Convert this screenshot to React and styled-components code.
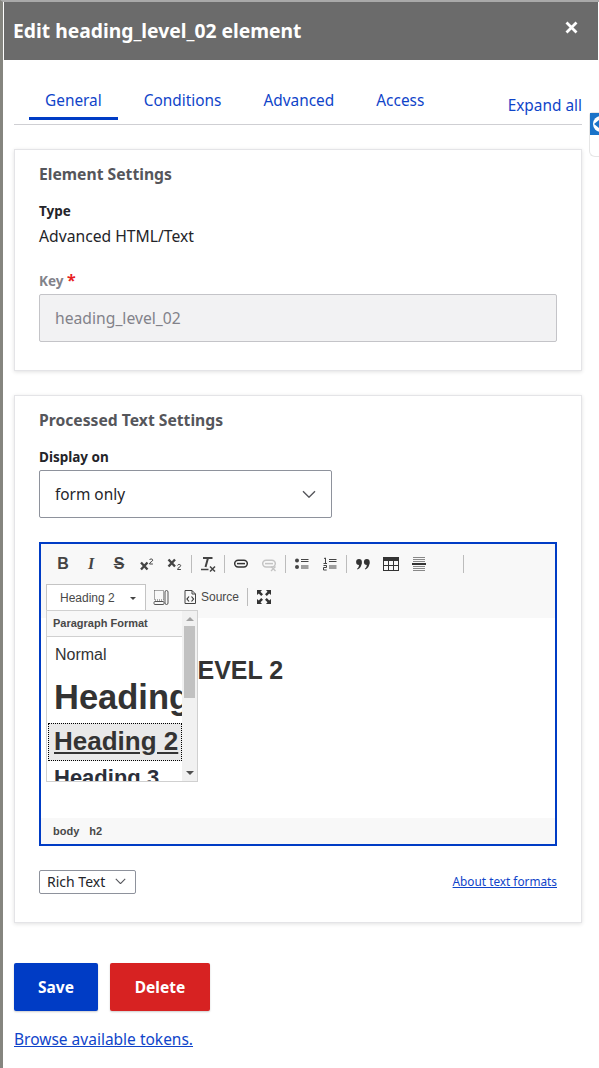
import styled, { createGlobalStyle } from "styled-components";

const GlobalStyle = createGlobalStyle`
  html, body {
    margin: 0;
    padding: 0;
    height: 100%;
    overflow: hidden;
    background: #fff;
  }
  body {
    font-family: "Noto Sans", "Open Sans", sans-serif;
  }
`;

const Icon = ({ children, w = 16, h = 16, vb }) => (
  <svg width={w} height={h} viewBox={vb || `0 0 ${w} ${h}`} fill="none">
    {children}
  </svg>
);

const SuperIcon = () => (
  <Icon>
    <path d="M2 6.500l6.500 7M8.500 6.500l-6.500 7" stroke="#444" strokeWidth="2.400" />
    <path d="M10.500 4c.3-1.400 3.200-1.500 3.200.2 0 1.400-3.200 1.900-3.200 3.800h3.400" stroke="#444" strokeWidth="1" />
  </Icon>
);

const SubIcon = () => (
  <Icon>
    <path d="M1.500 3.500l6.500 7M8 3.500l-6.500 7" stroke="#444" strokeWidth="2.400" />
    <path d="M10.500 9.500c.3-1.400 3.200-1.500 3.200.2 0 1.400-3.200 1.900-3.200 3.800h3.400" stroke="#444" strokeWidth="1" />
  </Icon>
);

const ClearIcon = () => (
  <Icon>
    <path d="M3 2h9.500M8 2L5.500 11" stroke="#444" strokeWidth="2" />
    <path d="M1 13.500h7.500" stroke="#444" strokeWidth="1.500" />
    <path d="M10 10.500l5 5M15 10.500l-5 5" stroke="#444" strokeWidth="1.500" />
  </Icon>
);

const LinkIcon = ({ off }) => (
  <Icon>
    <rect
      x="1.700"
      y="4.200"
      width="12.600"
      height="6.800"
      rx="3.400"
      stroke={off ? "#c4c4c4" : "#333"}
      strokeWidth="1.500"
    />
    <path d="M4 7.600h8" stroke={off ? "#c4c4c4" : "#333"} strokeWidth="1.500" />
    {off && <path d="M10 10.500l4.500 4.500M14.500 10.500L10 15" stroke="#c4c4c4" strokeWidth="1.300" />}
  </Icon>
);

const BulletIcon = () => (
  <Icon>
    <circle cx="3" cy="4.500" r="2" fill="#444" />
    <circle cx="3" cy="11" r="2" fill="#444" />
    <path d="M7 3.500h7.500M7 5.500h7.500M7 10h7.500M7 12h7.500" stroke="#444" strokeWidth="1" />
  </Icon>
);

const NumberIcon = () => (
  <Icon>
    <path d="M2 2.500l1.500-.5v5M1.500 7.500h3.500" stroke="#444" strokeWidth="1" />
    <path d="M1.500 9.500h3v2h-3v2.500h3.200" stroke="#444" strokeWidth="1" />
    <path d="M7 3.500h7.500M7 5.500h7.500M7 10h7.500M7 12h7.500" stroke="#444" strokeWidth="1" />
  </Icon>
);

const QuoteIcon = () => (
  <Icon>
    <circle cx="4" cy="6" r="2.900" fill="#333" />
    <path d="M6.800 6.200C6.800 10 5 12.500 2.500 13.500L2 12.800c1.500-1 2-2.500 2-4z" fill="#333" />
    <circle cx="11.800" cy="6" r="2.900" fill="#333" />
    <path d="M14.600 6.200c0 3.800-1.800 6.300-4.300 7.300l-.5-.7c1.500-1 2-2.500 2-4z" fill="#333" />
  </Icon>
);

const TableIcon = () => (
  <Icon>
    <rect x="0.500" y="1.500" width="15" height="13" stroke="#333" />
    <rect x="0.500" y="1.500" width="15" height="3.500" fill="#333" />
    <path d="M5.500 5v9M10.500 5v9M1 9.500h14" stroke="#333" />
  </Icon>
);

const RuleIcon = () => (
  <Icon>
    <path d="M2 1.500h12M2 3.500h12M2 5.500h12M2 10.500h12M2 12.500h12M2 14.500h12" stroke="#888" />
    <path d="M1 8h14" stroke="#333" strokeWidth="2" />
  </Icon>
);

const BlocksIcon = () => (
  <Icon>
    <rect x="1.500" y="1.500" width="9" height="9.500" stroke="#555" strokeDasharray="1 1" />
    <rect x="1" y="12.500" width="10" height="3" rx="1" stroke="#555" />
    <rect x="12" y="1.500" width="3" height="14" rx="1.500" stroke="#555" />
  </Icon>
);

const SourceIcon = () => (
  <Icon>
    <path d="M3 1.500h7l3.500 3.500v9.500H3z" stroke="#444" />
    <path d="M10 1.500V5h3.500" stroke="#444" />
    <path d="M7 7.500L5 10l2 2.500M9.500 7.500l2 2.500-2 2.500" stroke="#333" strokeWidth="1.200" />
  </Icon>
);

const MaximizeIcon = () => (
  <Icon>
    <path
      d="M1 1h5L4.500 2.800 7 5.200 5.200 7 2.800 4.500 1 6zM15 1v5l-1.800-1.500L10.800 7 9 5.200l2.500-2.400L10 1zM1 15v-5l1.800 1.500L5.200 9 7 10.800l-2.500 2.400L6 15zM15 15h-5l1.500-1.800L9 10.800 10.800 9l2.400 2.500L15 10z"
      fill="#333"
    />
  </Icon>
);

const Chevron = ({ w = 14 }) => (
  <svg width={w} height={w * 0.6} viewBox="0 0 14 8" fill="none">
    <path d="M1 1l6 6 6-6" stroke="#55565b" strokeWidth="1.400" />
  </svg>
);

export default function App() {
  return (
    <Page>
      <GlobalStyle />
      <Dialog>
        <Header>
          <Title>Edit heading_level_02 element</Title>
          <Close>
            <svg width="13" height="13" viewBox="0 0 13 13">
              <path d="M1.500 1.500l10 10M11.500 1.500l-10 10" stroke="#fff" strokeWidth="2.800" />
            </svg>
          </Close>
        </Header>
        <Body>
          <TabBar>
            <Tab $active>General</Tab>
            <Tab>Conditions</Tab>
            <Tab>Advanced</Tab>
            <Tab>Access</Tab>
            <ExpandAll>Expand all</ExpandAll>
          </TabBar>

          <Card $height={222}>
            <CardTitle>Element Settings</CardTitle>
            <Label>Type</Label>
            <Value>Advanced HTML/Text</Value>
            <Label $muted $top={22}>
              Key <Required>*</Required>
            </Label>
            <DisabledInput>heading_level_02</DisabledInput>
          </Card>

          <Card $height={528}>
            <CardTitle>Processed Text Settings</CardTitle>
            <Label>Display on</Label>
            <SelectBox>
              form only
              <Chevron />
            </SelectBox>

            <Editor>
              <Toolbar>
                <ToolRow>
                  <ToolBtn><Glyph>B</Glyph></ToolBtn>
                  <ToolBtn><Glyph $italic>I</Glyph></ToolBtn>
                  <ToolBtn><Glyph $strike>S</Glyph></ToolBtn>
                  <ToolBtn><SuperIcon /></ToolBtn>
                  <ToolBtn><SubIcon /></ToolBtn>
                  <Sep />
                  <ToolBtn><ClearIcon /></ToolBtn>
                  <Sep />
                  <ToolBtn><LinkIcon /></ToolBtn>
                  <ToolBtn><LinkIcon off /></ToolBtn>
                  <Sep />
                  <ToolBtn><BulletIcon /></ToolBtn>
                  <ToolBtn><NumberIcon /></ToolBtn>
                  <Sep />
                  <ToolBtn><QuoteIcon /></ToolBtn>
                  <ToolBtn><TableIcon /></ToolBtn>
                  <ToolBtn><RuleIcon /></ToolBtn>
                  <ToolBtn />
                  <Sep />
                </ToolRow>
                <ComboRow>
                  <Combo>
                    Heading 2
                    <ComboArrow />
                  </Combo>
                  <ToolBtn><BlocksIcon /></ToolBtn>
                  <SourceBtn>
                    <SourceIcon />
                    Source
                  </SourceBtn>
                  <Sep />
                  <ToolBtn><MaximizeIcon /></ToolBtn>
                </ComboRow>
              </Toolbar>
              <Content>
                <ContentHeading>HEADING LEVEL 2</ContentHeading>
              </Content>
              <PathBar>
                <span>body</span>
                <span>h2</span>
              </PathBar>
              <FormatPanel>
                <PanelList>
                  <PanelTitle>Paragraph Format</PanelTitle>
                  <OptNormal>Normal</OptNormal>
                  <OptH1>Heading 1</OptH1>
                  <OptH2>Heading 2</OptH2>
                  <OptH3>Heading 3</OptH3>
                </PanelList>
                <Scroll>
                  <ArrowUp />
                  <Thumb />
                  <ArrowDown />
                </Scroll>
              </FormatPanel>
            </Editor>

            <FormatRow>
              <FormatSelect>
                Rich Text
                <Chevron w={11} />
              </FormatSelect>
              <SmallLink>About text formats</SmallLink>
            </FormatRow>
          </Card>

          <Actions>
            <Button $bg="#003cc5" $width={84}>Save</Button>
            <Button $bg="#d72222" $width={100}>Delete</Button>
          </Actions>
          <TokenLink>Browse available tokens.</TokenLink>
        </Body>
      </Dialog>
      <SideTab>
        <SideBlue>
          <svg width="10" height="22" viewBox="0 0 10 22">
            <circle cx="11" cy="11" r="8" fill="#fff" />
            <path d="M4 11l5-4v8z" fill="#1a73c9" />
          </svg>
        </SideBlue>
      </SideTab>
    </Page>
  );
}

const Page = styled.div`
  position: relative;
  width: 599px;
  height: 1068px;
  overflow: hidden;
  background: #fff;
  box-sizing: border-box;
  border-left: 3px solid #85857f;
  border-top: 2px solid #a9a9a9;
`;
const Dialog = styled.div`
  display: flex;
  flex-direction: column;
  background: #fff;
  margin-left: 1px;
`;
const Header = styled.div`
  height: 58px;
  width: 594px;
  background: #6b6b6b;
  display: flex;
  justify-content: space-between;
  padding: 0 20px 0 9px;
  box-sizing: border-box;
`;
const Title = styled.div`
  color: #fff;
  font-size: 19.300px;
  font-weight: 700;
  line-height: 58px;
`;
const Close = styled.div`
  display: flex;
  padding-top: 19px;
`;
const Body = styled.div`
  padding: 0 16px 0 10px;
  width: 568px;
`;
const TabBar = styled.div`
  height: 64px;
  border-bottom: 1px solid #cfcfd3;
  display: flex;
  align-items: flex-end;
  padding-left: 15px;
  position: relative;
  margin-bottom: 24px;
`;
const Tab = styled.div`
  height: 38px;
  box-sizing: border-box;
  padding: 8px 16px 0;
  margin: 0 10px 4px 0;
  font-size: 15.400px;
  line-height: 22px;
  color: #0f44c9;
  border-bottom: 3px solid ${(p) => (p.$active ? "#003cc5" : "transparent")};
`;
const ExpandAll = styled.div`
  margin-left: auto;
  font-size: 15.400px;
  line-height: 22px;
  color: #0f44c9;
  margin-bottom: 7px;
`;
const Card = styled.section`
  height: ${(p) => p.$height}px;
  box-sizing: border-box;
  border: 1px solid #e4e4e7;
  box-shadow: 0 1px 4px rgba(0, 0, 0, 0.12);
  padding: 13px 24px;
  margin-bottom: 24px;
`;
const CardTitle = styled.h3`
  margin: 0 0 16px;
  font-size: 15.700px;
  line-height: 22px;
  font-weight: 700;
  color: #55565b;
`;
const Label = styled.div`
  font-size: 13.500px;
  line-height: 20px;
  font-weight: 700;
  color: ${(p) => (p.$muted ? "#82828a" : "#232429")};
  margin-top: ${(p) => p.$top || 0}px;
  margin-bottom: 3px;
`;
const Required = styled.span`
  color: #e81f1f;
  font-size: 16px;
`;
const Value = styled.div`
  font-size: 15.700px;
  line-height: 24px;
  color: #232429;
`;
const DisabledInput = styled.div`
  height: 48px;
  box-sizing: border-box;
  background: #f2f2f3;
  border: 1px solid #c4c4c8;
  border-radius: 2px;
  padding: 0 15px;
  line-height: 46px;
  font-size: 15.700px;
  color: #82828a;
`;
const SelectBox = styled.div`
  width: 293px;
  height: 48px;
  box-sizing: border-box;
  border: 1px solid #8e929c;
  border-radius: 2px;
  padding: 0 15px;
  font-size: 15.400px;
  color: #232429;
  display: flex;
  align-items: center;
  justify-content: space-between;
`;
const Editor = styled.div`
  position: relative;
  margin-top: 24px;
  height: 304px;
  box-sizing: border-box;
  border: 2px solid #003cc5;
  display: flex;
  flex-direction: column;
`;
const Toolbar = styled.div`
  height: 74px;
  background: #f8f8f8;
  padding: 5px 0 0 5px;
  box-sizing: border-box;
  flex-shrink: 0;
`;
const ToolRow = styled.div`
  display: flex;
  align-items: center;
  height: 30px;
  padding-left: 3px;
`;
const ComboRow = styled.div`
  display: flex;
  align-items: center;
  height: 26px;
  margin-top: 5px;
`;
const ToolBtn = styled.div`
  width: 28px;
  height: 26px;
  display: flex;
  align-items: center;
  justify-content: center;
  flex-shrink: 0;
`;
const Glyph = styled.span`
  font-family: ${(p) => (p.$italic ? '"Liberation Serif", serif' : '"Liberation Sans", Arial, sans-serif')};
  font-size: 16px;
  font-weight: 700;
  color: #444;
  font-style: ${(p) => (p.$italic ? "italic" : "normal")};
  text-decoration: ${(p) => (p.$strike ? "line-through" : "none")};
`;
const Sep = styled.div`
  width: 1px;
  height: 18px;
  background: #bcbcbc;
  margin: 0 2px;
  flex-shrink: 0;
`;
const Combo = styled.div`
  width: 100px;
  height: 27px;
  box-sizing: border-box;
  background: #fff;
  border: 1px solid #c4c4c4;
  border-bottom: none;
  padding-left: 13px;
  font-family: "Liberation Sans", Arial, sans-serif;
  font-size: 12px;
  line-height: 26px;
  color: #484848;
  position: relative;
  margin-right: 1px;
`;
const ComboArrow = styled.span`
  position: absolute;
  right: 9px;
  top: 12px;
  border: 3px solid transparent;
  border-top-color: #444;
  border-bottom: 0;
`;
const SourceBtn = styled.div`
  display: flex;
  align-items: center;
  gap: 3px;
  font-family: "Liberation Sans", Arial, sans-serif;
  font-size: 12px;
  color: #484848;
  margin: 0 6px 0 7px;
`;
const Content = styled.div`
  flex: 1;
  background: #fff;
  padding: 38px 0 0 19px;
  overflow: hidden;
`;
const ContentHeading = styled.div`
  font-family: "Liberation Sans", Arial, sans-serif;
  font-size: 25px;
  font-weight: 700;
  line-height: 28px;
  color: #333;
  white-space: nowrap;
`;
const PathBar = styled.div`
  height: 26px;
  background: #f8f8f8;
  padding: 0 12px;
  display: flex;
  gap: 10px;
  align-items: center;
  font-family: "Liberation Sans", Arial, sans-serif;
  font-size: 11px;
  font-weight: 700;
  color: #484848;
  flex-shrink: 0;
`;
const FormatPanel = styled.div`
  position: absolute;
  left: 5px;
  top: 66px;
  width: 152px;
  height: 172px;
  box-sizing: border-box;
  background: #fff;
  border: 1px solid #d0d0d0;
  display: flex;
  overflow: hidden;
  font-family: "Liberation Sans", Arial, sans-serif;
  color: #333;
`;
const PanelList = styled.div`
  width: 135px;
  overflow: hidden;
  white-space: nowrap;
  flex-shrink: 0;
`;
const PanelTitle = styled.div`
  height: 26px;
  box-sizing: border-box;
  background: #f8f8f8;
  border-bottom: 1px solid #d0d0d0;
  padding-left: 6px;
  font-size: 11px;
  font-weight: 700;
  line-height: 24px;
  color: #484848;
`;
const OptNormal = styled.div`
  font-size: 16px;
  line-height: 18px;
  padding: 9px 0 0 8px;
`;
const OptH1 = styled.div`
  font-size: 34.500px;
  font-weight: 700;
  line-height: 36px;
  padding: 15px 0 0 7px;
`;
const OptH2 = styled.div`
  font-size: 26px;
  font-weight: 700;
  line-height: 36px;
  height: 38px;
  box-sizing: border-box;
  margin: 8px 0 0 1px;
  padding-left: 6px;
  text-decoration: underline;
  background: #e9e9e9;
  outline: 1px dotted #000;
  outline-offset: -1px;
`;
const OptH3 = styled.div`
  font-size: 22px;
  font-weight: 700;
  line-height: 24px;
  padding: 5px 0 0 7px;
  color: #2b2f3a;
`;
const Scroll = styled.div`
  flex: 1;
  background: #f1f1f1;
  display: flex;
  flex-direction: column;
  align-items: center;
  position: relative;
`;
const ArrowUp = styled.span`
  margin-top: 6px;
  border: 4px solid transparent;
  border-bottom-color: #a3a3a3;
  border-top: 0;
  flex-shrink: 0;
`;
const Thumb = styled.div`
  width: 11px;
  height: 72px;
  margin-top: 5px;
  background: #c1c1c1;
`;
const ArrowDown = styled.span`
  margin-top: auto;
  margin-bottom: 6px;
  border: 4px solid transparent;
  border-top-color: #505050;
  border-bottom: 0;
  flex-shrink: 0;
`;
const FormatRow = styled.div`
  margin-top: 24px;
  display: flex;
  justify-content: space-between;
  align-items: flex-start;
`;
const FormatSelect = styled.div`
  width: 97px;
  height: 24px;
  box-sizing: border-box;
  border: 1px solid #8e929c;
  border-radius: 2px;
  padding: 0 9px 2px 7px;
  display: flex;
  align-items: center;
  justify-content: space-between;
  font-size: 14px;
  color: #232429;
`;
const SmallLink = styled.a`
  font-size: 11.800px;
  line-height: 22px;
  color: #0f44c9;
  text-decoration: underline;
`;
const Actions = styled.div`
  display: flex;
  gap: 12px;
  margin-top: 40px;
`;
const Button = styled.button`
  width: ${(p) => p.$width}px;
  height: 48px;
  border: 0;
  border-radius: 2px;
  background: ${(p) => p.$bg};
  color: #fff;
  font-family: inherit;
  font-size: 15.500px;
  font-weight: 700;
  box-shadow: 0 1px 2px rgba(0, 0, 0, 0.2);
`;
const TokenLink = styled.a`
  display: block;
  margin-top: 17px;
  font-size: 15.500px;
  line-height: 22px;
  color: #0f44c9;
  text-decoration: underline;
`;
const SideTab = styled.div`
  position: absolute;
  right: 0;
  top: 110px;
  width: 9px;
  height: 43px;
  background: #fff;
  border: 1px solid #e6e6e6;
  border-right: 0;
  border-radius: 4px 0 0 6px;
`;
const SideBlue = styled.div`
  width: 9px;
  height: 22px;
  background: #1a73c9;
`;
